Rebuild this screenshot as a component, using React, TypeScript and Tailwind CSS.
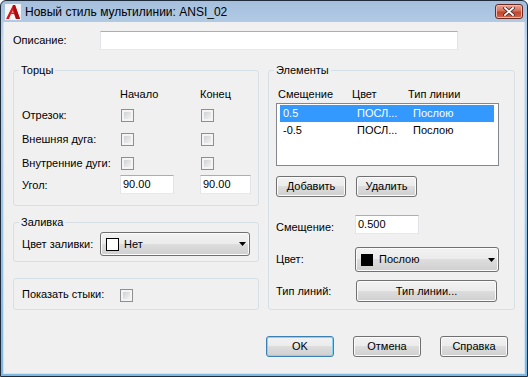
const btnBg = "bg-[linear-gradient(#f2f2f2,#ebebeb_50%,#dddddd_50%,#cfcfcf)]";

function Check() {
  return (
    <div className="w-[13px] h-[13px] border border-[#8f8f8f] bg-[#f4f4f4] p-[2px]">
      <div className="w-full h-full bg-[linear-gradient(135deg,#cfd1d4,#f3f3f3)]" />
    </div>
  );
}

function TextBox({ className, value }: { className: string; value?: string }) {
  return (
    <div
      className={
        "h-[19px] bg-white border border-[#abadb3] border-l-[#e2e3ea] border-r-[#e2e3ea] border-b-[#e3e9ef] px-[2px] flex items-center " +
        className
      }
    >
      {value}
    </div>
  );
}

function Arrow() {
  return (
    <svg width="7" height="4" viewBox="0 0 7 4" className="ml-auto mr-[3px]">
      <path d="M0 0h7L3.5 4z" fill="#000" />
    </svg>
  );
}

function Btn({ className, children }: { className: string; children: React.ReactNode }) {
  return (
    <div
      className={
        "rounded-[3px] border border-[#707070] shadow-[inset_0_0_0_1px_#fbfbfb] flex items-center justify-center " +
        btnBg +
        " " +
        className
      }
    >
      {children}
    </div>
  );
}

function AcadIcon() {
  return (
    <svg width="16" height="16" viewBox="0 0 16 16">
      <rect x="0" y="0" width="16" height="16" fill="#f4f4f4" />
      <path d="M1 15L8 1h2l5 14h-4l-2-5H6l-2 5z" fill="#d9161c" />
      <path d="M8 1h2l5 14h-4L8.5 5z" fill="#a80d12" />
      <path d="M6.5 9h2.2l-1-3z" fill="#f08a8a" />
    </svg>
  );
}

export default function App() {
  return (
    <div className="w-[528px] h-[377px] border border-[#1d2b3b] rounded-t-[6px] bg-[linear-gradient(#a5bfdc,#bdd4eb_40px,#7db8e2)] flex flex-col font-['Liberation_Sans',Arial,sans-serif] text-[11px] leading-[13px] text-black overflow-hidden">
      <div className="h-[21px] shrink-0 flex items-center pl-[4px] pr-[4px]">
        <AcadIcon />
        <span className="ml-[4px] text-[12px] leading-[14px]">Новый стиль мультилинии: ANSI_02</span>
        <div className="ml-auto w-[28px] h-[15px] rounded-[3px] border border-[#6b2a20] bg-[linear-gradient(#e9a697,#d3705c_45%,#c2432b_55%,#cd6a52)] shadow-[inset_0_0_0_1px_#f0b8aa] flex items-center justify-center">
          <svg width="12" height="9" viewBox="0 0 12 9">
            <path d="M2 1l8 7M10 1l-8 7" stroke="#4a2b28" strokeWidth="3.4" strokeLinecap="square" />
            <path d="M2 1l8 7M10 1l-8 7" stroke="#ffffff" strokeWidth="1.8" strokeLinecap="square" />
          </svg>
        </div>
      </div>

      <div className="flex-1 mx-[2px] mb-[2px] border-x border-b border-[#d3e3f3] bg-[#f0f0f0] flex flex-col pt-[9px] px-[9px]">
        <div className="flex items-center">
          <span className="w-[87px]">Описание:</span>
          <TextBox className="w-[358px]" />
        </div>

        <div className="grid grid-cols-[246px_247px] gap-x-[9px] mt-[14px]">
          <div className="flex flex-col">
            <fieldset className="border border-[#d5dfe5] rounded-[3px]">
              <legend className="ml-[5px] px-[2px]">Торцы</legend>
              <div className="pt-[11px] pb-[11px] pl-[8px]">
                <div className="flex h-[13px] items-center">
                  <span className="w-[98px]" />
                  <span className="w-[80px]">Начало</span>
                  <span>Конец</span>
                </div>
                <div className="flex h-[13px] items-center mt-[8px]">
                  <span className="w-[98px]">Отрезок:</span>
                  <div className="w-[80px] pl-[1px]"><Check /></div>
                  <div className="pl-[1px]"><Check /></div>
                </div>
                <div className="flex h-[13px] items-center mt-[11px]">
                  <span className="w-[98px]">Внешняя дуга:</span>
                  <div className="w-[80px] pl-[1px]"><Check /></div>
                  <div className="pl-[1px]"><Check /></div>
                </div>
                <div className="flex h-[13px] items-center mt-[11px]">
                  <span className="w-[98px]">Внутренние дуги:</span>
                  <div className="w-[80px] pl-[1px]"><Check /></div>
                  <div className="pl-[1px]"><Check /></div>
                </div>
                <div className="flex items-center mt-[5px]">
                  <span className="w-[98px] pt-[2px]">Угол:</span>
                  <div className="w-[80px]"><TextBox className="w-[54px]" value="90.00" /></div>
                  <TextBox className="w-[51px]" value="90.00" />
                </div>
              </div>
            </fieldset>

            <fieldset className="border border-[#d5dfe5] rounded-[3px] mt-[10px]">
              <legend className="ml-[5px] px-[2px]">Заливка</legend>
              <div className="pt-[3px] pb-[5px] pl-[8px] flex items-center">
                <span className="w-[78px]">Цвет заливки:</span>
                <div className={"w-[150px] h-[24px] rounded-[3px] border border-[#707070] shadow-[inset_0_0_0_1px_#fbfbfb] flex items-center pl-[5px] " + btnBg}>
                  <div className="w-[13px] h-[13px] border border-black bg-white" />
                  <span className="ml-[5px]">Нет</span>
                  <Arrow />
                </div>
              </div>
            </fieldset>

            <div className="border border-[#d5dfe5] rounded-[3px] mt-[16px] h-[32px] flex items-center pl-[8px]">
              <span className="w-[98px]">Показать стыки:</span>
              <div className="mt-[3px]"><Check /></div>
            </div>
          </div>

          <fieldset className="border border-[#d5dfe5] rounded-[3px]">
            <legend className="ml-[5px] px-[2px]">Элементы</legend>
            <div className="pt-[11px] pb-[7px] pl-[7px]">
              <div className="flex h-[13px] items-center pl-[2px]">
                <span className="w-[74px]">Смещение</span>
                <span className="w-[56px]">Цвет</span>
                <span>Тип линии</span>
              </div>
              <div className="mt-[2px] w-[223px] h-[63px] border border-[#828790] bg-white pt-[1px] pl-[3px] pr-[4px]">
                <div className="h-[17px] bg-[#3399ff] text-white flex items-center pl-[3px]">
                  <span className="w-[74px]">0.5</span>
                  <span className="w-[56px]">ПОСЛ...</span>
                  <span>Послою</span>
                </div>
                <div className="h-[17px] flex items-center pl-[3px]">
                  <span className="w-[74px]">-0.5</span>
                  <span className="w-[56px]">ПОСЛ...</span>
                  <span>Послою</span>
                </div>
              </div>
              <div className="flex gap-[10px] mt-[10px]">
                <Btn className="w-[70px] h-[21px]">Добавить</Btn>
                <Btn className="w-[61px] h-[21px]">Удалить</Btn>
              </div>
              <div className="flex items-center mt-[18px]">
                <span className="w-[79px] pt-[6px]">Смещение:</span>
                <TextBox className="w-[64px]" value="0.500" />
              </div>
              <div className="flex items-center mt-[13px]">
                <span className="w-[79px]">Цвет:</span>
                <div className={"w-[144px] h-[25px] rounded-[3px] border border-[#707070] shadow-[inset_0_0_0_1px_#fbfbfb] flex items-center pl-[5px] " + btnBg}>
                  <div className="w-[12px] h-[12px] bg-black" />
                  <span className="ml-[6px]">Послою</span>
                  <Arrow />
                </div>
              </div>
              <div className="flex items-center mt-[8px]">
                <span className="w-[80px]">Тип линий:</span>
                <Btn className="w-[141px] h-[22px]">Тип линии...</Btn>
              </div>
            </div>
          </fieldset>
        </div>

        <div className="flex justify-end gap-[19px] mt-[26px] mr-[7px]">
          <div className={"w-[68px] h-[21px] rounded-[3px] border border-[#3c7fb1] shadow-[inset_0_0_0_1px_#83d4f7] flex items-center justify-center " + btnBg}>
            OK
          </div>
          <Btn className="w-[68px] h-[21px]">Отмена</Btn>
          <Btn className="w-[68px] h-[21px]">Справка</Btn>
        </div>
      </div>
    </div>
  );
}
